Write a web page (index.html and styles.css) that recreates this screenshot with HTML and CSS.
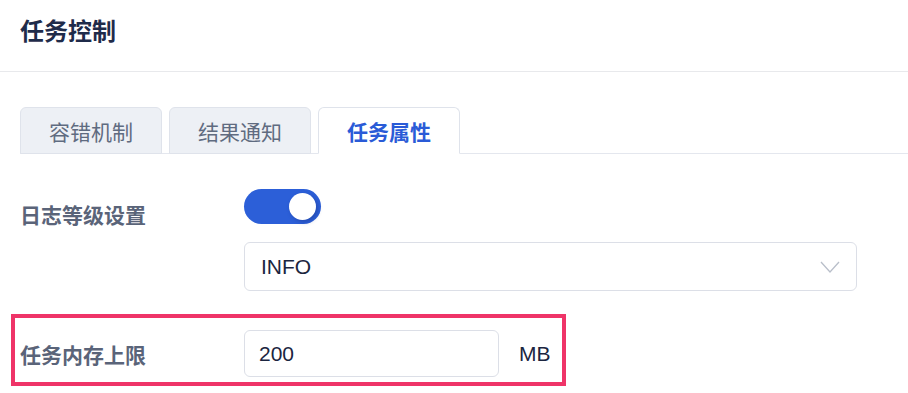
FILE: index.html
```html
<!DOCTYPE html>
<html lang="zh-CN">
  <head>
    <meta charset="UTF-8" />
    <meta name="viewport" content="width=device-width, initial-scale=1.0" />
    <title>任务控制</title>
    <link rel="stylesheet" href="styles.css">
  </head>

  <body>
    <!-- cabecera con el titulo del panel -->
    <header class="panel-header">
      <h1 class="panel-title">任务控制</h1>
    </header>

    <main class="panel-body">
      <nav class="tabs">
        <a class="tab" href="#">容错机制</a>
        <a class="tab" href="#">结果通知</a>
        <a class="tab tab-active" href="#">任务属性</a>
      </nav>

      <section class="form">
        <div class="form-row">
          <label class="form-label">日志等级设置</label>
          <div class="form-control">
            <span class="switch"><span class="switch-knob"></span></span>
            <div class="select">
              <span>INFO</span>
              <svg class="select-arrow" width="20" height="12" viewBox="0 0 20 12">
                <path d="M1 1 L10 11 L19 1" fill="none" stroke="#b9bfca" stroke-width="1.3" />
              </svg>
            </div>
          </div>
        </div>

        <!-- fila resaltada -->
        <div class="form-row form-row-mark">
          <label class="form-label">任务内存上限</label>
          <div class="form-control form-inline">
            <input class="input" type="text" value="200" />
            <span class="unit">MB</span>
          </div>
        </div>
      </section>
    </main>
  </body>
</html>
```

FILE: styles.css
```css
html {
  box-sizing: border-box;
  font-family: "Liberation Sans", "Noto Sans CJK SC", sans-serif;
  font-size: 16px;
}

*,
*:before,
*:after {
  box-sizing: inherit;
}

body {
  margin: 0;
  background-color: #fff;
  color: #1b2540;
}

.panel-header {
  height: 72px;
  padding: 0 20px;
  display: flex;
  align-items: center;
  border-bottom: 1px solid #e8e9ec;
}

.panel-title {
  margin: 0 0 12px;
  font-size: 24px;
  font-weight: 700;
  color: #1f2b4a;
}

.panel-body {
  padding: 35px 0 0 20px;
}

/* pestañas */
.tabs {
  display: flex;
  gap: 7px;
  border-bottom: 1px solid #e4e7ee;
}

.tab {
  width: 142px;
  height: 47px;
  margin-bottom: -1px;
  display: flex;
  align-items: center;
  justify-content: center;
  border: 1px solid #dfe3eb;
  border-radius: 6px 6px 0 0;
  background-color: #edf0f5;
  color: #5f6b80;
  font-size: 21px;
  text-decoration: none;
}

.tab-active {
  background-color: #fff;
  border-bottom-color: #fff;
  color: #2a5bd7;
  font-weight: 700;
}

/* formulario */
.form {
  padding-top: 35px;
}

.form-row {
  display: flex;
  align-items: flex-start;
}

.form-label {
  width: 224px;
  padding-top: 10px;
  font-size: 21px;
  font-weight: 700;
  color: #5a6479;
}

.form-control {
  display: flex;
  flex-direction: column;
  align-items: flex-start;
}

.switch {
  position: relative;
  width: 77px;
  height: 35px;
  border-radius: 18px;
  background-color: #2c5fd8;
}

.switch-knob {
  position: absolute;
  top: 4px;
  right: 5px;
  width: 27px;
  height: 27px;
  border-radius: 50%;
  background-color: #fff;
  box-shadow: 2px 2px 4px rgba(20, 40, 110, 0.35);
}

.select {
  width: 613px;
  height: 49px;
  margin-top: 18px;
  padding: 0 16px;
  display: flex;
  align-items: center;
  justify-content: space-between;
  border: 1px solid #dcdfe7;
  border-radius: 6px;
  font-size: 21px;
  color: #1b2540;
}

.form-row-mark {
  width: 555px;
  margin: 23px 0 0 -9px;
  padding: 12px 0 5px 5px;
  border: 4px solid #ef3468;
  align-items: center;
}

.form-row-mark .form-label {
  padding-top: 0;
}

.form-inline {
  flex-direction: row;
  align-items: center;
}

.input {
  width: 255px;
  height: 47px;
  padding: 0 14px;
  border: 1px solid #dcdfe7;
  border-radius: 6px;
  font-family: inherit;
  font-size: 21px;
  color: #1b2540;
  outline: none;
}

.unit {
  margin-left: 20px;
  font-size: 21px;
  color: #1b2540;
}
```
